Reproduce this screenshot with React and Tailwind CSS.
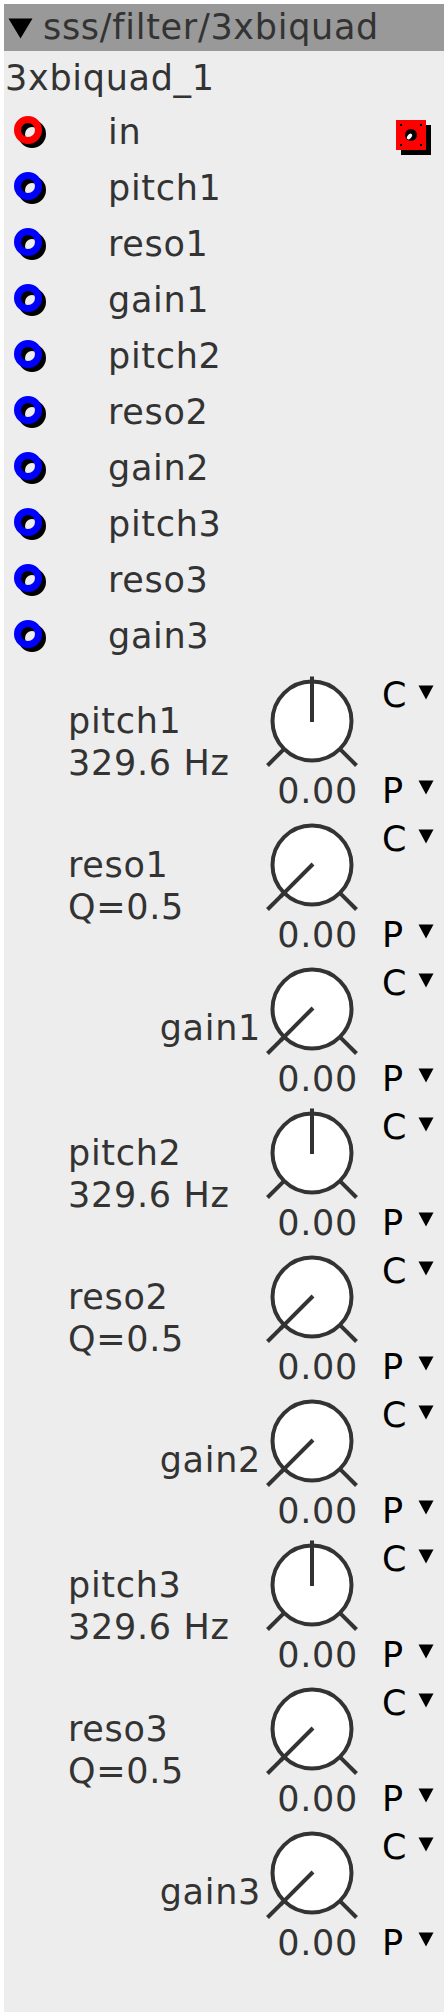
import React from "react";

const FONT = { fontFamily: '"DejaVu Sans", "Liberation Sans", sans-serif' };

const ports = [
  { name: "in", color: "#ff0000" },
  { name: "pitch1", color: "#0000ff" },
  { name: "reso1", color: "#0000ff" },
  { name: "gain1", color: "#0000ff" },
  { name: "pitch2", color: "#0000ff" },
  { name: "reso2", color: "#0000ff" },
  { name: "gain2", color: "#0000ff" },
  { name: "pitch3", color: "#0000ff" },
  { name: "reso3", color: "#0000ff" },
  { name: "gain3", color: "#0000ff" },
];

const knobs = [
  { name: "pitch1", disp: "329.6 Hz", bi: true },
  { name: "reso1", disp: "Q=0.5", bi: false },
  { name: "gain1", disp: null, bi: false },
  { name: "pitch2", disp: "329.6 Hz", bi: true },
  { name: "reso2", disp: "Q=0.5", bi: false },
  { name: "gain2", disp: null, bi: false },
  { name: "pitch3", disp: "329.6 Hz", bi: true },
  { name: "reso3", disp: "Q=0.5", bi: false },
  { name: "gain3", disp: null, bi: false },
];

function PortRing({ color }) {
  return (
    <svg width="40" height="40" viewBox="0 0 40 40" className="block">
      <circle cx="20" cy="20" r="10.5" fill="none" stroke="#000" strokeWidth="7" />
      <circle cx="16" cy="16" r="10.5" fill="none" stroke={color} strokeWidth="7" />
    </svg>
  );
}

function OutPort() {
  return (
    <svg width="40" height="40" viewBox="0 0 40 40" className="block">
      <rect x="7" y="7" width="30" height="30" fill="#000" />
      <rect x="2" y="2" width="30" height="30" fill="#ff0000" />
      <circle cx="17" cy="17" r="6" fill="#000" />
      <ellipse cx="15.5" cy="18.5" rx="2" ry="3.2" transform="rotate(40 15.5 18.5)" fill="#fff" />
      <rect x="6" y="6" width="2" height="2" fill="#000" />
      <rect x="26" y="6" width="2" height="2" fill="#000" />
      <rect x="6" y="26" width="2" height="2" fill="#000" />
      <rect x="26" y="26" width="2" height="2" fill="#000" />
    </svg>
  );
}

function Knob({ bi }) {
  return (
    <svg width="96" height="96" viewBox="0 0 96 96" className="block">
      <line x1="19.7" y1="76.3" x2="3.5" y2="92.5" stroke="#333" strokeWidth="4" />
      <line x1="76.3" y1="76.3" x2="92.5" y2="92.5" stroke="#333" strokeWidth="4" />
      <circle cx="48" cy="48" r="39.5" fill="#fff" stroke="#333" strokeWidth="4" />
      {bi ? (
        <line x1="48" y1="49" x2="48" y2="3.5" stroke="#333" strokeWidth="4" />
      ) : (
        <line x1="49" y1="47" x2="16.2" y2="79.8" stroke="#333" strokeWidth="4" />
      )}
    </svg>
  );
}

function Tri({ w = 16, h = 15 }) {
  return (
    <svg width={w} height={h} viewBox={`0 0 ${w} ${h}`} className="block">
      <polygon points={`0.5,0.5 ${w - 0.5},0.5 ${w / 2},${h - 0.5}`} fill="#000" />
    </svg>
  );
}

function KnobRow({ k }) {
  return (
    <div className="flex h-[144px]">
      <div className="w-[260px] flex flex-col">
        {k.disp ? (
          <div className="pl-[64px] pt-[36px] text-[#333] leading-[42px]">
            <div>{k.name}</div>
            <div>{k.disp}</div>
          </div>
        ) : (
          <div className="pt-[55px] pr-[3px] text-right text-[#333] leading-[42px]">
            {k.name}
          </div>
        )}
      </div>
      <div className="w-[96px] flex flex-col">
        <div className="mt-[8.5px]">
          <Knob bi={k.bi} />
        </div>
        <div className="mt-[4.4px] pr-[2px] text-right text-[#333] leading-[36px]">0.00</div>
      </div>
      <div className="flex-1 flex flex-col pl-[22px]">
        <div className="mt-[13px] flex items-start leading-[36px] text-black">
          <span className="w-[36px]">C</span>
          <span className="mt-[8px]">
            <Tri />
          </span>
        </div>
        <div className="mt-[60px] flex items-start leading-[36px] text-black">
          <span className="w-[36px]">P</span>
          <span className="mt-[7px]">
            <Tri />
          </span>
        </div>
      </div>
    </div>
  );
}

export default function App() {
  return (
    <div className="bg-white p-1 w-[448px] min-h-[2016px]" style={FONT}>
      <div className="bg-[#ededed] w-[440px] h-[2008px] text-[35px] tracking-[0.7px] overflow-hidden">
        <div className="h-[47px] bg-[#999999] flex items-start pl-[4px] leading-[47px]">
          <span className="mt-[14px]">
            <Tri w={25} h={21} />
          </span>
          <span className="ml-[10px] text-[#333]">sss/filter/3xbiquad</span>
        </div>
        <div className="h-[53px] leading-[54px] pl-[1px] text-[#333]">3xbiquad_1</div>
        <div className="flex flex-col">
          {ports.map((p, i) => (
            <div key={p.name} className="h-[56px] flex items-start">
              <div className="w-[104px] pl-[8px] pt-[10px]">
                <PortRing color={p.color} />
              </div>
              <div className="flex-1 leading-[56px] text-[#333]">{p.name}</div>
              {i === 0 && (
                <div className="pt-[14px] pr-[10px]">
                  <OutPort />
                </div>
              )}
            </div>
          ))}
        </div>
        <div className="flex flex-col">
          {knobs.map((k) => (
            <KnobRow key={k.name} k={k} />
          ))}
        </div>
      </div>
    </div>
  );
}
